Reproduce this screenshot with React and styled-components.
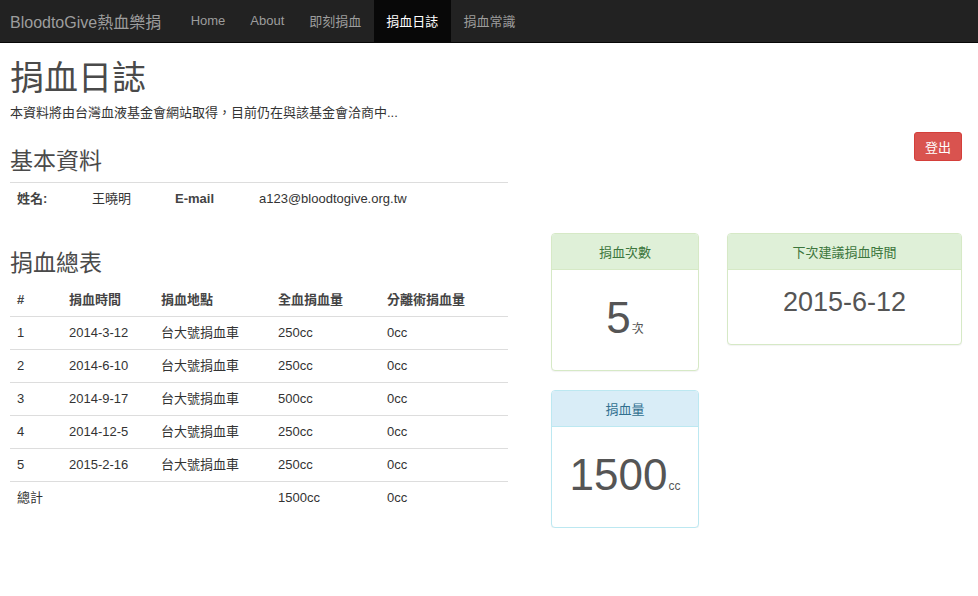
import React from "react";
import styled, { createGlobalStyle } from "styled-components";

const GlobalStyle = createGlobalStyle`
	body {
		margin: 0;
		background: #fff;
		color: #333;
		font-family: "Liberation Sans", Arial, "Noto Sans CJK TC", sans-serif;
		font-size: 13px;
	}
	* {
		box-sizing: border-box;
	}
`;

const records = [
	{ id: 1, date: "2014-3-12", place: "台大號捐血車", whole: "250cc", apheresis: "0cc" },
	{ id: 2, date: "2014-6-10", place: "台大號捐血車", whole: "250cc", apheresis: "0cc" },
	{ id: 3, date: "2014-9-17", place: "台大號捐血車", whole: "500cc", apheresis: "0cc" },
	{ id: 4, date: "2014-12-5", place: "台大號捐血車", whole: "250cc", apheresis: "0cc" },
	{ id: 5, date: "2015-2-16", place: "台大號捐血車", whole: "250cc", apheresis: "0cc" },
];

const navItems = ["Home", "About", "即刻捐血", "捐血日誌", "捐血常識"];

function App() {
	return (
		<>
			<GlobalStyle />
			<Navbar>
				<Brand>BloodtoGive熱血樂捐</Brand>
				<NavList>
					{navItems.map((item) => (
						<NavItem key={item} $active={item === "捐血日誌"}>
							{item}
						</NavItem>
					))}
				</NavList>
			</Navbar>
			<Container>
				<PageTitle>捐血日誌</PageTitle>
				<Lead>本資料將由台灣血液基金會網站取得，目前仍在與該基金會洽商中...</Lead>
				<MainRow>
					<LeftCol>
						<SectionTitle>基本資料</SectionTitle>
						<InfoRow>
							<b>姓名:</b>
							<span>王曉明</span>
							<b>E-mail</b>
							<span>a123@bloodtogive.org.tw</span>
						</InfoRow>
						<SectionTitle $table>捐血總表</SectionTitle>
						<Table>
							<colgroup>
								<col style={{ width: 52 }} />
								<col style={{ width: 92 }} />
								<col style={{ width: 117 }} />
								<col style={{ width: 109 }} />
								<col />
							</colgroup>
							<thead>
								<tr>
									<th>#</th>
									<th>捐血時間</th>
									<th>捐血地點</th>
									<th>全血捐血量</th>
									<th>分離術捐血量</th>
								</tr>
							</thead>
							<tbody>
								{records.map((r) => (
									<tr key={r.id}>
										<td>{r.id}</td>
										<td>{r.date}</td>
										<td>{r.place}</td>
										<td>{r.whole}</td>
										<td>{r.apheresis}</td>
									</tr>
								))}
								<tr>
									<td>總計</td>
									<td></td>
									<td></td>
									<td>1500cc</td>
									<td>0cc</td>
								</tr>
							</tbody>
						</Table>
					</LeftCol>
					<RightCol>
						<LogoutButton>登出</LogoutButton>
						<PanelGrid>
							<Panel $variant="success">
								<PanelHeading $variant="success">捐血次數</PanelHeading>
								<PanelBody $tall>
									<BigNumber>5</BigNumber>
									<Unit>次</Unit>
								</PanelBody>
							</Panel>
							<Panel $variant="success">
								<PanelHeading $variant="success">下次建議捐血時間</PanelHeading>
								<PanelBody>
									<DateText>2015-6-12</DateText>
								</PanelBody>
							</Panel>
							<Panel $variant="info">
								<PanelHeading $variant="info">捐血量</PanelHeading>
								<PanelBody $tall>
									<BigNumber>1500</BigNumber>
									<Unit>cc</Unit>
								</PanelBody>
							</Panel>
						</PanelGrid>
					</RightCol>
				</MainRow>
			</Container>
		</>
	);
}

const Navbar = styled.nav`
	display: flex;
	align-items: stretch;
	height: 43px;
	background-color: #222;
	border-bottom: 1px solid #080808;
`;

const Brand = styled.div`
	display: flex;
	align-items: center;
	padding: 0 17px 0 10px;
	font-size: 16px;
	color: #9d9d9d;
`;

const NavList = styled.ul`
	display: flex;
	margin: 0;
	padding: 0;
	list-style: none;
`;

const NavItem = styled.li`
	display: flex;
	align-items: center;
	padding: 0 12.5px 2px;
	font-size: 13px;
	color: ${(p) => (p.$active ? "#fff" : "#9d9d9d")};
	background-color: ${(p) => (p.$active ? "#080808" : "transparent")};
`;

const Container = styled.div`
	padding: 0 16px 0 10px;
`;

const PageTitle = styled.h1`
	margin: 15px 0 0;
	font-size: 34px;
	font-weight: 400;
	line-height: 40px;
	color: #4a4a4a;
`;

const Lead = styled.p`
	margin: 6px 0 0;
	font-size: 13px;
	line-height: 18px;
`;

const MainRow = styled.div`
	display: flex;
	align-items: flex-start;
	margin-top: 10px;
`;

const LeftCol = styled.div`
	width: 498px;
	flex-shrink: 0;
`;

const SectionTitle = styled.h3`
	margin: ${(p) => (p.$table ? "33px 0 0" : "14px 0 0")};
	padding-bottom: ${(p) => (p.$table ? "0" : "6px")};
	border-bottom: ${(p) => (p.$table ? "none" : "1px solid #ddd")};
	font-size: 23px;
	font-weight: 400;
	line-height: 30px;
	color: #4a4a4a;
`;

const InfoRow = styled.div`
	display: grid;
	grid-template-columns: 75px 83px 84px auto;
	padding: 7px 7px;
	line-height: 18px;
	font-size: 13px;
	b {
		font-weight: 700;
		color: #444;
	}
`;

const Table = styled.table`
	width: 100%;
	margin-top: 6px;
	border-collapse: collapse;
	table-layout: fixed;
	font-size: 13px;
	th,
	td {
		padding: 7px 7px;
		line-height: 18px;
		text-align: left;
		vertical-align: top;
	}
	th {
		font-weight: 700;
		color: #444;
		border-bottom: 1px solid #ddd;
	}
	tbody tr:not(:last-child) td {
		border-bottom: 1px solid #ddd;
	}
`;

const RightCol = styled.div`
	flex: 1;
	margin-left: 43px;
	display: flex;
	flex-direction: column;
`;

const LogoutButton = styled.button`
	align-self: flex-end;
	width: 48px;
	height: 29px;
	padding: 0;
	font-family: inherit;
	font-size: 13px;
	color: #fff;
	background-color: #d9534f;
	border: 1px solid #d43f3a;
	border-radius: 3px;
`;

const PanelGrid = styled.div`
	display: grid;
	grid-template-columns: 148px 235px;
	column-gap: 28px;
	row-gap: 19px;
	align-items: start;
	margin-top: 72px;
`;

const palette = {
	success: { border: "#d6e9c6", bg: "#dff0d8", text: "#3c763d" },
	info: { border: "#bce8f1", bg: "#d9edf7", text: "#31708f" },
};

const Panel = styled.div`
	border: 1px solid ${(p) => palette[p.$variant].border};
	border-radius: 4px;
	background: #fff;
	box-shadow: 0 1px 1px rgba(0, 0, 0, 0.05);
	overflow: hidden;
`;

const PanelHeading = styled.div`
	height: 36px;
	display: flex;
	align-items: center;
	justify-content: center;
	font-size: 13px;
	color: ${(p) => palette[p.$variant].text};
	background-color: ${(p) => palette[p.$variant].bg};
	border-bottom: 1px solid ${(p) => palette[p.$variant].border};
`;

const PanelBody = styled.div`
	display: flex;
	align-items: baseline;
	justify-content: center;
	height: ${(p) => (p.$tall ? "100px" : "74px")};
	padding-top: ${(p) => (p.$tall ? "20px" : "12px")};
	color: #555;
`;

const BigNumber = styled.span`
	font-size: 44px;
	line-height: 56px;
`;

const Unit = styled.span`
	font-size: 12px;
	margin-left: 1px;
`;

const DateText = styled.span`
	font-size: 27px;
	line-height: 40px;
`;

export default App;
